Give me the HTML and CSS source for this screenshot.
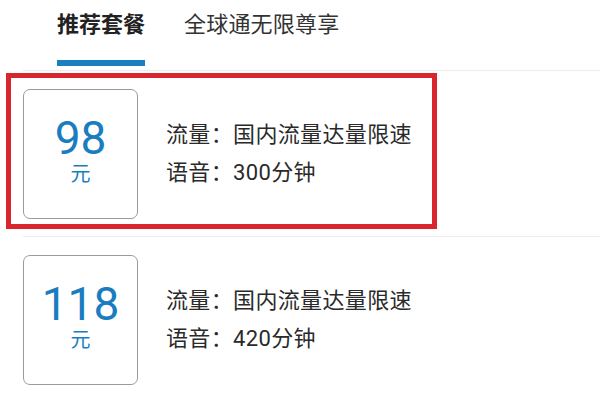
FILE: index.html
```html
<!DOCTYPE html>
<html lang="zh-CN">
<head>
<meta charset="utf-8">
<link rel="stylesheet" href="styles.css">
</head>
<body>
<div class="page">
  <nav class="tabs">
    <div class="tab active">推荐套餐</div>
    <div class="tab">全球通无限尊享</div>
  </nav>
  <ul class="plans">
    <li class="plan">
      <div class="price">
        <span class="amount">98</span>
        <span class="unit">元</span>
      </div>
      <div class="details">
        <div class="line">流量：国内流量达量限速</div>
        <div class="line">语音：300分钟</div>
      </div>
    </li>
    <li class="plan">
      <div class="price">
        <span class="amount">118</span>
        <span class="unit">元</span>
      </div>
      <div class="details">
        <div class="line">流量：国内流量达量限速</div>
        <div class="line">语音：420分钟</div>
      </div>
    </li>
  </ul>
  <div class="highlight"></div>
</div>
</body>
</html>
```
FILE: styles.css
```css
html, body {
  margin: 0;
  padding: 0;
  background: #ffffff;
}
body {
  font-family: Roboto, "Noto Sans CJK SC", "Noto Sans", sans-serif;
  color: #2e2e2e;
  width: 600px;
  height: 400px;
  overflow: hidden;
}
.page {
  position: relative;
  width: 600px;
  height: 400px;
}
.tabs {
  display: flex;
  gap: 39px;
  padding-left: 57px;
  height: 70px;
  box-sizing: border-box;
}
.tab {
  font-size: 22px;
  line-height: 30px;
  padding-top: 10px;
  height: 60px;
  box-sizing: border-box;
  color: #333333;
  letter-spacing: 0.2px;
}
.tab.active {
  font-weight: 700;
  color: #222222;
  border-bottom: 6px solid #1a7fc1;
  height: 66px;
  letter-spacing: 0;
}
.plans {
  list-style: none;
  margin: 0;
  padding: 0;
}
.plan {
  margin-left: 23px;
  border-top: 1px solid #ececec;
  padding: 18px 0 17px 0;
  display: flex;
  align-items: center;
  gap: 28px;
}
.price {
  width: 115px;
  height: 130px;
  box-sizing: border-box;
  border: 1.5px solid #9a9a9a;
  border-radius: 7px;
  display: flex;
  flex-direction: column;
  align-items: center;
  padding-top: 24px;
  color: #1a7dc0;
}
.amount {
  font-family: Roboto, sans-serif;
  font-size: 46px;
  line-height: 48px;
}
.unit {
  font-size: 20px;
  line-height: 24px;
}
.details {
  font-size: 22px;
  line-height: 38px;
  letter-spacing: 0.35px;
  color: #2a2a2a;
}
.highlight {
  position: absolute;
  left: 6px;
  top: 73px;
  width: 431px;
  height: 156px;
  box-sizing: border-box;
  border: 5px solid #d9262e;
  pointer-events: none;
}
```
